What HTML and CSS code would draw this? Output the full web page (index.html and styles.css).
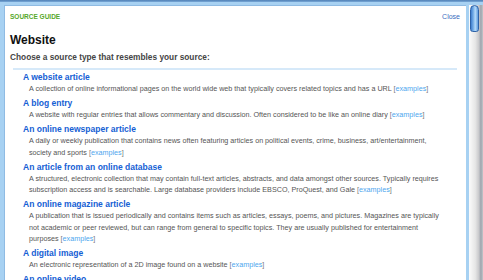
FILE: index.html
```html
<!DOCTYPE html>
<html>
<head>
<meta charset="utf-8">
<link rel="stylesheet" href="styles.css">
</head>
<body>
<div class="frame">
  <div class="topbar"></div>
  <div class="row">
    <div class="panel">
      <header class="head">
        <span class="brand">SOURCE GUIDE</span>
        <a class="close" href="#">Close</a>
      </header>
      <h1 class="heading">Website</h1>
      <p class="prompt">Choose a source type that resembles your source:</p>
      <ul class="types">
        <li class="type">
          <a class="title" href="#">A website article</a>
          <p class="desc">A collection of online informational pages on the world wide web that typically covers related topics and has a URL <span class="ex">[<a href="#">examples</a>]</span></p>
        </li>
        <li class="type">
          <a class="title" href="#">A blog entry</a>
          <p class="desc">A website with regular entries that allows commentary and discussion. Often considered to be like an online diary <span class="ex">[<a href="#">examples</a>]</span></p>
        </li>
        <li class="type">
          <a class="title" href="#">An online newspaper article</a>
          <p class="desc">A daily or weekly publication that contains news often featuring articles on political events, crime, business, art/entertainment, society and sports <span class="ex">[<a href="#">examples</a>]</span></p>
        </li>
        <li class="type">
          <a class="title" href="#">An article from an online database</a>
          <p class="desc">A structured, electronic collection that may contain full-text articles, abstracts, and data amongst other sources. Typically requires subscription access and is searchable. Large database providers include EBSCO, ProQuest, and Gale <span class="ex">[<a href="#">examples</a>]</span></p>
        </li>
        <li class="type">
          <a class="title" href="#">An online magazine article</a>
          <p class="desc">A publication that is issued periodically and contains items such as articles, essays, poems, and pictures. Magazines are typically not academic or peer reviewed, but can range from general to specific topics. They are usually published for entertainment purposes <span class="ex">[<a href="#">examples</a>]</span></p>
        </li>
        <li class="type">
          <a class="title" href="#">A digital image</a>
          <p class="desc">An electronic representation of a 2D image found on a website <span class="ex">[<a href="#">examples</a>]</span></p>
        </li>
        <li class="type">
          <a class="title" href="#">An online video</a>
          <p class="desc">A recording of moving visual images found on a website <span class="ex">[<a href="#">examples</a>]</span></p>
        </li>
      </ul>
    </div>
    <div class="edge"></div>
    <div class="scroll"><div class="thumb"></div></div>
  </div>
</div>
</body>
</html>
```
FILE: styles.css
```css
* { box-sizing: border-box; }
html, body { margin: 0; padding: 0; }
body {
  width: 483px;
  height: 280px;
  overflow: hidden;
  background: #a7d1f2;
  font-family: "Liberation Sans", Arial, sans-serif;
}
.frame { display: flex; flex-direction: column; height: 280px; }
.topbar {
  height: 2px;
  background: linear-gradient(#4f7fb5, #7aa9d8);
  flex: none;
}
.row {
  display: flex;
  flex: 1;
  padding: 3px 0 0 4px;
  min-height: 0;
}
.panel {
  flex: 1;
  background: #fff;
  border-left: 1px solid #8fbbe3;
  border-top: 1px solid #8fbbe3;
  padding: 6px 6px 0 5px;
  overflow: hidden;
}
.edge { width: 3px; background: #a7d1f2; flex: none; }
.scroll {
  width: 14px;
  flex: none;
  background: linear-gradient(to right, #fbfbfb 0%, #e6e6e6 45%, #c9c9cc 70%, #9ea4ad 85%, #c3c6ca 100%);
  padding: 0 4px 0 1px;
}
.thumb {
  height: 27px;
  border-radius: 5px 5px 3px 3px;
  border: 1px solid #2f63a8;
  background: linear-gradient(to right, #3f7fcf, #8cc0f0 45%, #b9dcfa 60%, #5f9ddf);
}
.head {
  display: flex;
  justify-content: space-between;
  align-items: baseline;
  line-height: 10px;
}
.brand {
  font-size: 6.5px;
  font-weight: bold;
  color: #56a82a;
}
.close {
  font-size: 7px;
  color: #3b6cc0;
  text-decoration: none;
}
.heading {
  margin: 11px 0 0;
  font-size: 12px;
  line-height: 14px;
  font-weight: bold;
  color: #111;
}
.prompt {
  margin: 4px 0 0;
  font-size: 8.3px;
  line-height: 12px;
  font-weight: bold;
  color: #444;
}
.types {
  list-style: none;
  margin: 5px 3px 0 3px;
  padding: 2px 0 0 10px;
  border-top: 2px solid #d6e9f9;
}
.type { margin-bottom: 3.5px; }
.title {
  display: block;
  font-size: 8.5px;
  line-height: 11px;
  font-weight: bold;
  color: #1560d4;
  text-decoration: none;
}
.desc {
  margin: 0;
  padding: 0 13px 0 6px;
  font-size: 7.2px;
  line-height: 11.5px;
  color: #555;
}
.ex { color: #777; }
.ex a { color: #4ea6ee; text-decoration: none; }
```
